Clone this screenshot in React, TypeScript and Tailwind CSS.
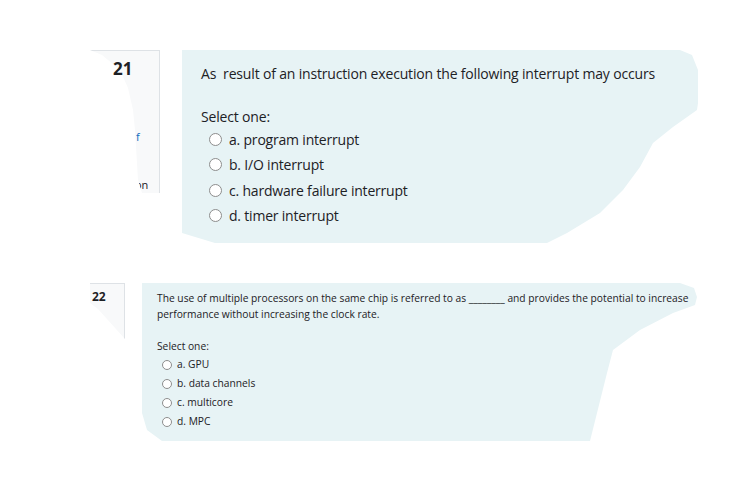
import React from 'react'

const q1Options = ['a. program interrupt', 'b. I/O interrupt', 'c. hardware failure interrupt', 'd. timer interrupt']
const q2Options = ['a. GPU', 'b. data channels', 'c. multicore', 'd. MPC']

function Radio({ size }: { size: 'lg' | 'sm' }) {
  return (
    <span
      className={
        size === 'lg'
          ? 'inline-block w-[13px] h-[13px] rounded-full border border-[#8d8d8d] bg-white shrink-0'
          : 'inline-block w-[10px] h-[10px] rounded-full border border-[#8d8d8d] bg-white shrink-0'
      }
    />
  )
}

export default function App() {
  return (
    <div className="w-[756px] h-[490px] bg-white text-[#1d2125] font-['Open_Sans',sans-serif] relative overflow-hidden">
      {/* Question 21 */}
      <div className="flex items-start pt-[50px] pl-[90px] gap-[22px]">
        <div className="relative w-[70px] h-[143px]">
          {/* cropped info box */}
          <div className="absolute inset-0 bg-[#f8f9fa] border-t border-r border-[#dee2e6] [clip-path:polygon(0_0,100%_0,100%_100%,52px_100%,48px_130px,45px_80px,43px_60px,38px_38px,30px_20px,12px_5px)]">
            <div className="absolute left-[46px] top-[78px] text-[11px] text-[#0f6cbf]">f</div>
            <div className="absolute left-[45px] top-[126px] text-[11px] text-[#1d2125]">on</div>
          </div>
          <div className="absolute left-[23px] top-[8px] text-[17px] font-bold leading-[22px]">21</div>
        </div>
        <div className="w-[518px] h-[193px] bg-[#e7f3f5] pl-[19px] pt-[14px] [clip-path:polygon(0_0,498px_0,510px_5px,516px_20px,516px_53px,515px_60px,491px_77px,471px_93px,458px_117px,441px_140px,418px_163px,385px_183px,365px_193px,33px_193px,0_183px)]">
          <p className="text-[14px] leading-[20px] tracking-[-0.17px]">As&nbsp; result of an instruction execution the following interrupt may occurs</p>
          <p className="mt-[23px] text-[14px] leading-[20px] tracking-[-0.17px]">Select one:</p>
          <div className="flex flex-col">
            {q1Options.map((o) => (
              <div key={o} className="flex items-center h-[25.3px] pl-[8px] gap-[7px] text-[14px] tracking-[-0.2px]">
                <Radio size="lg" />
                <span>{o}</span>
              </div>
            ))}
          </div>
        </div>
      </div>

      {/* Question 22 */}
      <div className="flex items-start mt-[40px] pl-[90px] gap-[17px]">
        <div className="relative w-[35px] h-[56px] bg-[#f8f9fa] border-t border-r border-[#dee2e6] [clip-path:polygon(0_0,100%_0,100%_100%,8px_26px,0_20px)]">
          <div className="absolute left-[2px] top-[5px] text-[12px] font-bold leading-[16px]">22</div>
        </div>
        <div className="w-[556px] h-[158px] bg-[#e7f3f5] pl-[15px] pt-[7px] [clip-path:polygon(0_0,538px_0,552px_5px,555px_14px,553px_22px,531px_30px,498px_47px,471px_67px,465px_90px,455px_130px,448px_158px,20px_158px,5px_147px,0_130px)]">
          <p className="text-[10.25px] leading-[16px]">
            The use of multiple processors on the same chip is referred to as ________ and provides the potential to increase performance without increasing the clock rate.
          </p>
          <p className="mt-[16px] text-[10.25px] leading-[16px]">Select one:</p>
          <div className="mt-[1px] flex flex-col">
            {q2Options.map((o) => (
              <div key={o} className="flex items-center h-[19px] pl-[5px] gap-[5px] text-[10.25px]">
                <Radio size="sm" />
                <span>{o}</span>
              </div>
            ))}
          </div>
        </div>
      </div>
    </div>
  )
}
